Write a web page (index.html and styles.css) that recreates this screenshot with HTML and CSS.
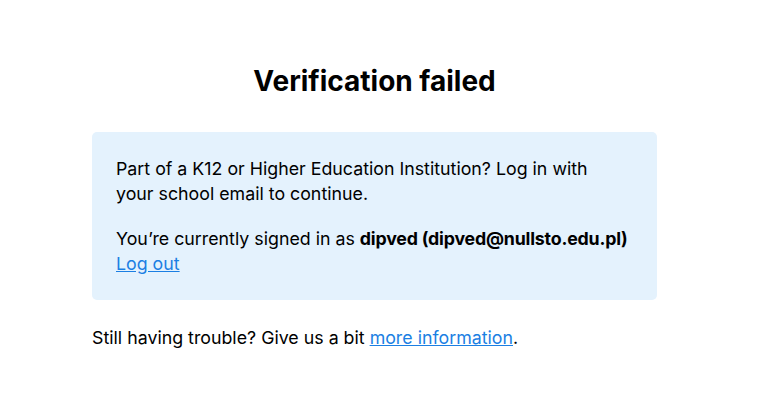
FILE: index.html
```html
<!DOCTYPE html>
<html lang="en">
<head>
    <meta charset="UTF-8">
    <meta name="viewport" content="width=device-width, initial-scale=1.0">
    <title>Verification failed</title>
    <link rel="stylesheet" href="styles.css">
</head>
<body>
    <div class="container">
        <h1>Verification failed</h1>
        <div class="notice">
            <p>Part of a K12 or Higher Education Institution? Log in with<br>
            your school email to continue.</p>
            <p><span class="signed-in">You’re currently signed in as <strong>dipved (dipved@nullsto.edu.pl)</strong></span><br>
            <a href="#">Log out</a></p>
        </div>
        <p class="help">Still having trouble? Give us a bit <a href="#">more information</a>.</p>
    </div>
</body>
</html>
```

FILE: styles.css
```css
body {
    font-family: Inter, "Liberation Sans", sans-serif;
    background-color: #fff;
    color: #000;
    margin: 0;
    padding: 0;
}
.container {
    width: 565px;
    margin: 0 0 0 92px;
    padding-top: 63px;
}
h1 {
    text-align: center;
    font-size: 28px;
    font-weight: 700;
    line-height: 36px;
    margin: 0 0 33px;
}
.notice {
    background-color: #e4f2fd;
    border-radius: 5px;
    padding: 24px 24px 24px;
}
.notice p,
.help {
    font-size: 17.8px;
    line-height: 25px;
    margin: 0;
}
.notice p + p {
    margin-top: 20px;
}
.signed-in {
    white-space: nowrap;
}
.signed-in strong {
    letter-spacing: -0.2px;
}
.help {
    margin-top: 25px;
}
a {
    color: #1b7fe3;
}
```
